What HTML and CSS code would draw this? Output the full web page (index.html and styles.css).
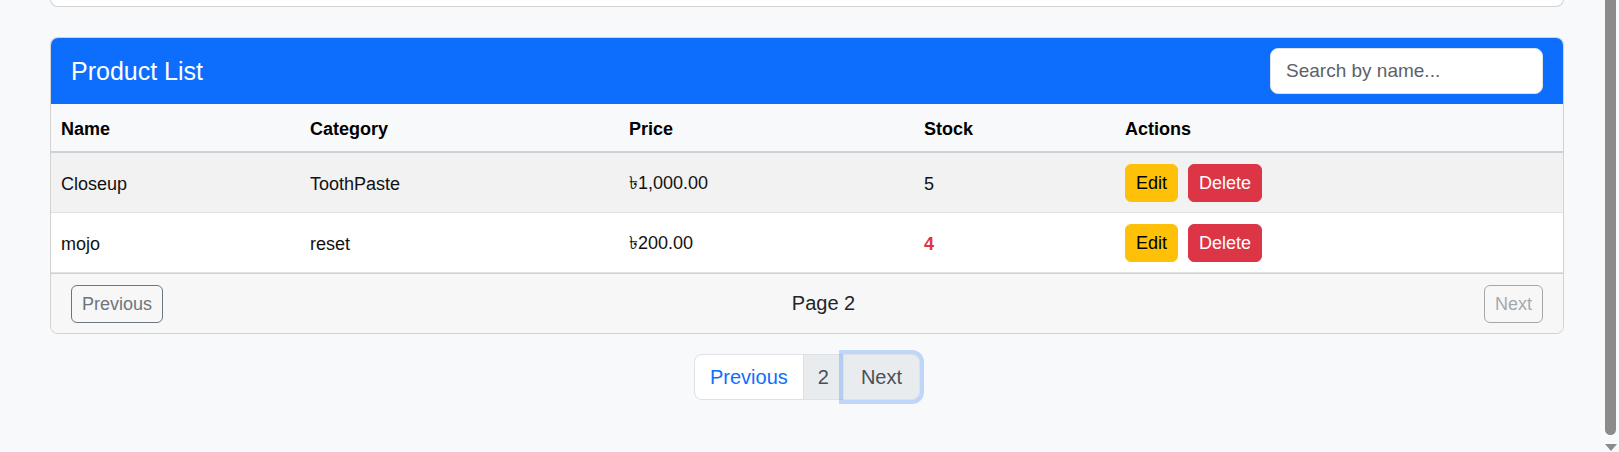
FILE: index.html
```html
<!DOCTYPE html>
<html lang="en">
<head>
<meta charset="utf-8">
<title>Product List</title>
<link rel="stylesheet" href="styles.css">
</head>
<body>
<div class="layout">
  <main class="main">
    <div class="card top-card"></div>
    <section class="card product-card">
      <header class="card-header">
        <h4 class="card-title">Product List</h4>
        <input class="search" type="text" placeholder="Search by name...">
      </header>
      <table class="table">
        <thead>
          <tr>
            <th class="c-name">Name</th>
            <th class="c-cat">Category</th>
            <th class="c-price">Price</th>
            <th class="c-stock">Stock</th>
            <th class="c-actions">Actions</th>
          </tr>
        </thead>
        <tbody>
          <tr class="striped">
            <td>Closeup</td>
            <td>ToothPaste</td>
            <td>৳1,000.00</td>
            <td>5</td>
            <td><div class="actions"><button class="btn btn-edit">Edit</button><button class="btn btn-delete">Delete</button></div></td>
          </tr>
          <tr>
            <td>mojo</td>
            <td>reset</td>
            <td>৳200.00</td>
            <td><span class="low-stock">4</span></td>
            <td><div class="actions"><button class="btn btn-edit">Edit</button><button class="btn btn-delete">Delete</button></div></td>
          </tr>
        </tbody>
      </table>
      <footer class="card-footer">
        <button class="btn btn-outline">Previous</button>
        <span class="page-label">Page 2</span>
        <button class="btn btn-outline is-disabled" disabled>Next</button>
      </footer>
    </section>
    <nav class="pager">
      <ul class="pagination">
        <li><a class="page-link page-prev">Previous</a></li>
        <li><span class="page-link page-num">2</span></li>
        <li><button class="page-link page-next">Next</button></li>
      </ul>
    </nav>
  </main>
  <div class="scrollbar">
    <div class="thumb"></div>
    <svg class="arrow" width="12" height="8" viewBox="0 0 12 8"><polygon points="0,0 12,0 6,7" fill="#8b8b8b"/></svg>
  </div>
</div>
</body>
</html>
```

FILE: styles.css
```css
* { box-sizing: border-box; }

html, body {
  margin: 0;
  height: 100%;
}

body {
  background: #f8f9fa;
  font-family: "Liberation Sans", Arial, sans-serif;
  color: #212529;
  overflow: hidden;
}

.layout {
  display: flex;
  height: 452px;
}

.main {
  flex: 1;
  min-width: 0;
  padding: 0 40px 0 50px;
  display: flex;
  flex-direction: column;
}

.card {
  background: #fff;
  border: 1px solid rgba(0, 0, 0, 0.175);
  border-radius: 8px;
}

.top-card {
  flex-shrink: 0;
  height: 60px;
  margin-top: -53px;
}

.product-card {
  margin-top: 30px;
  overflow: hidden;
  flex-shrink: 0;
}

.card-header {
  height: 66px;
  background: #0d6efd;
  padding: 0 20px;
  display: flex;
  align-items: center;
  justify-content: space-between;
}

.card-title {
  margin: 0;
  font-size: 25px;
  font-weight: 400;
  color: #fff;
}

.search {
  width: 273px;
  height: 46px;
  border: 1px solid #dee2e6;
  border-radius: 8px;
  padding: 0 15px;
  font-family: "Liberation Sans", Arial, sans-serif;
  font-size: 19px;
  color: #212529;
  background: #fff;
  outline: none;
}

.search::placeholder {
  color: #5d6166;
}

.table {
  width: 100%;
  border-collapse: separate;
  border-spacing: 0;
  table-layout: fixed;
  font-size: 18px;
  color: #111;
}

.table th {
  text-align: left;
  font-weight: 700;
  color: #000;
  background: #f8f9fa;
  height: 49px;
  padding: 4px 10px 0;
  border-bottom: 2px solid #cfd1d3;
  vertical-align: middle;
}

.c-name { width: 249px; }
.c-cat { width: 319px; }
.c-price { width: 295px; }
.c-stock { width: 201px; }

.table td {
  height: 60px;
  padding: 4px 10px 0;
  border-bottom: 1px solid #dee2e6;
  vertical-align: middle;
  background: #fff;
}

.table tr.striped td {
  background: #f2f2f2;
}

.low-stock {
  color: #dc3545;
  font-weight: 700;
}

.actions {
  display: flex;
  gap: 10px;
  margin-top: -4px;
}

.btn {
  font-family: "Liberation Sans", Arial, sans-serif;
  font-size: 18px;
  height: 38px;
  line-height: 36px;
  padding: 0 10px;
  border: 1px solid transparent;
  border-radius: 6px;
  background: transparent;
  cursor: pointer;
}

.btn-edit {
  background: #ffc107;
  border-color: #ffc107;
  color: #000;
}

.btn-delete {
  background: #dc3545;
  border-color: #dc3545;
  color: #fff;
}

.btn-outline {
  border-color: #6c757d;
  color: #6c757d;
}

.btn-outline.is-disabled {
  opacity: 0.6;
}

.card-footer {
  height: 60px;
  border-top: 1px solid #d3d3d3;
  background: #f7f7f7;
  padding: 0 20px;
  display: flex;
  align-items: center;
  justify-content: space-between;
}

.page-label {
  font-size: 20px;
  color: #212529;
}

.pager {
  margin-top: 20px;
  display: flex;
  justify-content: center;
}

.pagination {
  list-style: none;
  margin: 0;
  padding: 0;
  display: flex;
}

.pagination li + li {
  margin-left: -1px;
}

.page-link {
  display: block;
  height: 46px;
  line-height: 44px;
  font-family: "Liberation Sans", Arial, sans-serif;
  font-size: 20px;
  border: 1px solid #dee2e6;
  text-decoration: none;
}

.page-prev {
  background: #fff;
  color: #0d6efd;
  padding: 0 15px;
  border-radius: 8px 0 0 8px;
}

.page-num {
  background: #e9ecef;
  color: #495057;
  padding: 0 14px;
}

.page-next {
  position: relative;
  z-index: 1;
  background: #e9ecef;
  color: #495057;
  padding: 0 17px;
  border-radius: 0 8px 8px 0;
  box-shadow: 0 0 0 4px rgba(13, 110, 253, 0.25);
}

.scrollbar {
  width: 15px;
  flex-shrink: 0;
  padding: 0 3px 0 1px;
  display: flex;
  flex-direction: column;
  align-items: center;
}

.thumb {
  width: 11px;
  height: 435px;
  background: #8b8b8b;
  border-radius: 0 0 6px 6px;
}

.arrow {
  display: block;
  margin-top: 9px;
}
```
